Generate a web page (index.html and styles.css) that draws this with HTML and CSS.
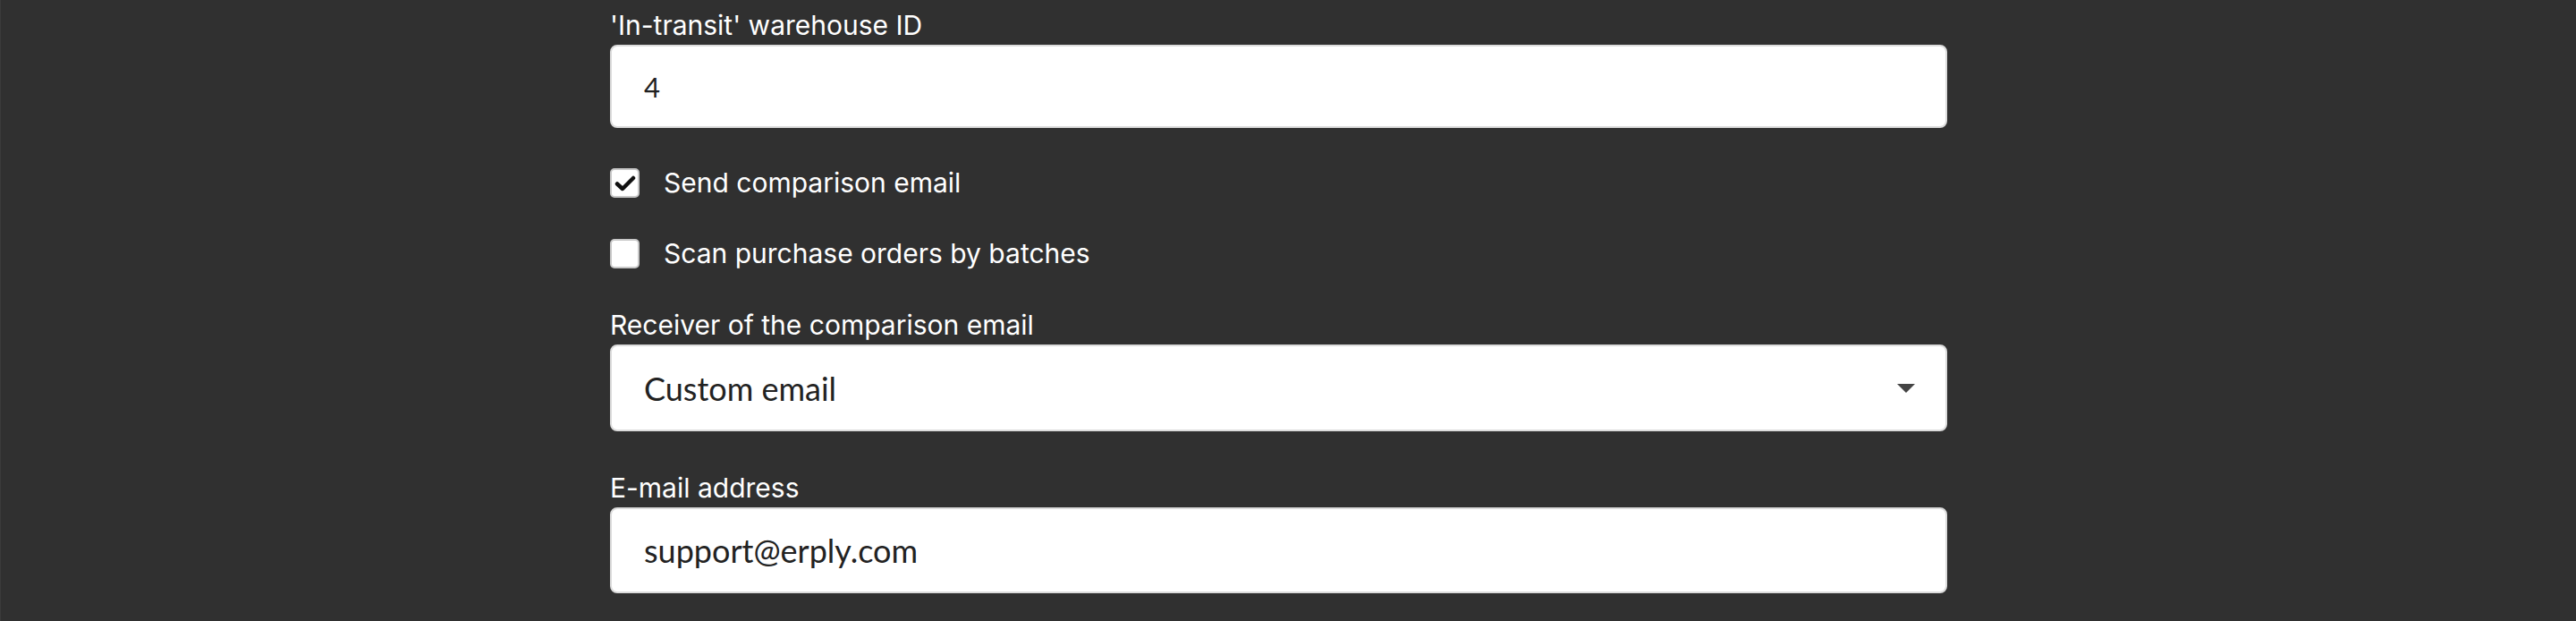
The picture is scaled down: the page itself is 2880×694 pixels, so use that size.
FILE: index.html
```html
<!DOCTYPE html>
<html lang="en">
<head>
	<meta charset="UTF-8">
	<title>Settings</title>
	<link rel="stylesheet" href="styles.css">
</head>
<body>
	<div class="form">
		<div class="field">
			<label class="field-label">'In-transit' warehouse ID</label>
			<div class="input input-small">4</div>
		</div>
		<div class="check-row first">
			<span class="check checked">
				<svg width="24" height="20" viewBox="0 0 24 20"><path d="M3 10.5 L9 16 L21 4" fill="none" stroke="#111" stroke-width="4.5" stroke-linecap="round" stroke-linejoin="round"/></svg>
			</span>
			<span class="check-text">Send comparison email</span>
		</div>
		<div class="check-row">
			<span class="check"></span>
			<span class="check-text">Scan purchase orders by batches</span>
		</div>
		<div class="field">
			<label class="field-label">Receiver of the comparison email</label>
			<div class="input select">
				<span>Custom email</span>
				<span class="caret"></span>
			</div>
		</div>
		<div class="field">
			<label class="field-label">E-mail address</label>
			<div class="input input-mail">support@erply.com</div>
		</div>
	</div>
</body>
</html>
```

FILE: styles.css
```css
html, body{
	margin:0;
	padding:0;
	height:100%;
}
body{
	background:#303030;
	font-family:Inter, Lato, sans-serif;
	color:#fff;
	border-left:1px solid #3a3a3a;
	box-sizing:border-box;
}
.form{
	margin-left:681px;
	width:1495px;
	padding-top:10px;
}
.field-label{
	display:block;
	font-size:30px;
	line-height:36px;
	margin-bottom:4px;
}
.field + .field{
	margin-top:45px;
}
.check-row + .field{
	margin-top:45px;
}
.input{
	box-sizing:border-box;
	height:93px;
	background:#fff;
	border:2px solid #dcdcdc;
	border-radius:8px;
	padding:0 36px;
	display:flex;
	align-items:center;
	color:#222;
	font-family:Lato, "Liberation Sans", sans-serif;
	font-size:36px;
}
.input-small{
	font-size:31px;
}
.select{
	height:97px;
	justify-content:space-between;
	padding-right:34px;
}
.input-mail{
	height:96px;
}
.caret{
	width:0;
	height:0;
	border-left:10px solid transparent;
	border-right:10px solid transparent;
	border-top:10px solid #444;
}
.check-row{
	display:flex;
	align-items:center;
	height:33px;
	margin-top:46px;
}
.check-row.first{
	margin-top:45px;
}
.check{
	box-sizing:border-box;
	width:33px;
	height:33px;
	background:#fff;
	border:2px solid #c8c8c8;
	border-radius:5px;
	display:flex;
	align-items:center;
	justify-content:center;
	margin-right:27px;
}
.check-text{
	font-size:30px;
	line-height:33px;
}
```
